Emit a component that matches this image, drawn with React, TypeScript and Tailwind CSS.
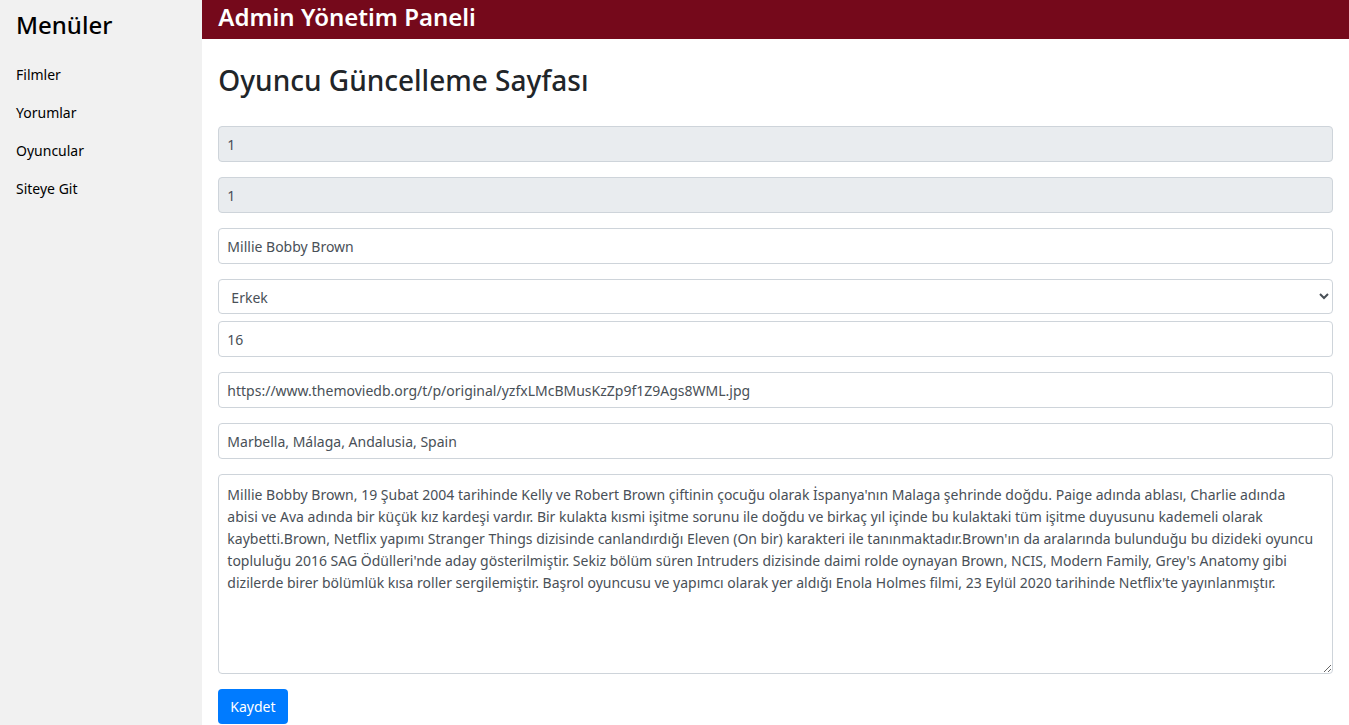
const menu = ["Filmler", "Yorumlar", "Oyuncular", "Siteye Git"];

const control =
  "block w-full rounded-[4px] border border-[#ced4da] bg-white px-2 text-sm text-[#495057] outline-none focus:border-[#80bdff]";

const biography =
  "Millie Bobby Brown, 19 Şubat 2004 tarihinde Kelly ve Robert Brown çiftinin çocuğu olarak İspanya'nın Malaga şehrinde doğdu. Paige adında ablası, Charlie adında abisi ve Ava adında bir küçük kız kardeşi vardır. Bir kulakta kısmi işitme sorunu ile doğdu ve birkaç yıl içinde bu kulaktaki tüm işitme duyusunu kademeli olarak kaybetti.Brown, Netflix yapımı Stranger Things dizisinde canlandırdığı Eleven (On bir) karakteri ile tanınmaktadır.Brown'ın da aralarında bulunduğu bu dizideki oyuncu topluluğu 2016 SAG Ödülleri'nde aday gösterilmiştir. Sekiz bölüm süren Intruders dizisinde daimi rolde oynayan Brown, NCIS, Modern Family, Grey's Anatomy gibi dizilerde birer bölümlük kısa roller sergilemiştir. Başrol oyuncusu ve yapımcı olarak yer aldığı Enola Holmes filmi, 23 Eylül 2020 tarihinde Netflix'te yayınlanmıştır.";

function TextField({
  label,
  value,
  readOnly = false,
}: {
  label: string;
  value: string;
  readOnly?: boolean;
}) {
  return (
    <input
      type="text"
      aria-label={label}
      defaultValue={value}
      readOnly={readOnly}
      className={`${control} mb-[15px] h-9 read-only:bg-[#e9ecef]`}
    />
  );
}

export default function App() {
  return (
    <div className="flex min-h-screen bg-white font-['Noto_Sans','Open_Sans',sans-serif] text-[#212529]">
      <aside className="w-[15%] shrink-0 bg-[#f1f1f1] text-black">
        <h2 className="mb-[14px] px-4 pt-2 text-2xl leading-[34px] font-medium">Menüler</h2>
        <nav className="flex flex-col">
          {menu.map((item) => (
            <a key={item} href="#" className="px-4 py-2 text-sm leading-[22px] hover:bg-[#cccccc]">
              {item}
            </a>
          ))}
        </nav>
      </aside>

      <div className="min-w-0 flex-1">
        <header className="bg-[#75091b] px-4 pb-[5px] text-white">
          <h1 className="text-2xl leading-[34px] font-semibold">Admin Yönetim Paneli</h1>
        </header>

        <main className="px-4 pt-6">
          <h2 className="mb-[29px] text-[28px] leading-[34px] font-medium">Oyuncu Güncelleme Sayfası</h2>
          <form onSubmit={(event) => event.preventDefault()}>
            <TextField label="Oyuncu No" value="1" readOnly />
            <TextField label="Film No" value="1" readOnly />
            <TextField label="Ad Soyad" value="Millie Bobby Brown" />
            <select
              aria-label="Cinsiyet"
              defaultValue="Erkek"
              className={`${control} mb-[7px] h-[35px] pt-[2px] pr-0`}
            >
              <option>Erkek</option>
              <option>Kadın</option>
            </select>
            <TextField label="Yaş" value="16" />
            <TextField
              label="Fotoğraf"
              value="https://www.themoviedb.org/t/p/original/yzfxLMcBMusKzZp9f1Z9Ags8WML.jpg"
            />
            <TextField label="Doğum Yeri" value="Marbella, Málaga, Andalusia, Spain" />
            <textarea
              aria-label="Biyografi"
              defaultValue={biography}
              className={`${control} mb-[15px] h-[200px] resize pt-[9px] pr-4 pb-2 leading-[22px]`}
            />
            <button
              type="submit"
              className="block h-[35px] rounded-[4px] bg-[#007bff] px-3 text-sm text-white hover:bg-[#0069d9]"
            >
              Kaydet
            </button>
          </form>
        </main>
      </div>
    </div>
  );
}
